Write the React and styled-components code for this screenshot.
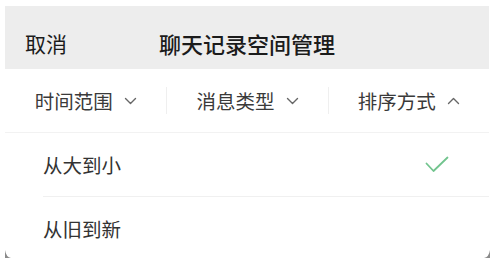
import React from "react";
import styled, { createGlobalStyle } from "styled-components";

const Global = createGlobalStyle`
  html, body { margin: 0; padding: 0; background: #ffffff; }
  body { font-family: "Noto Sans CJK SC", "Noto Sans", sans-serif; }
`;

const Page = styled.div`
  position: relative;
  width: 498px;
  height: 267px;
  padding: 6px 9px 0 5px;
  box-sizing: border-box;
  background: #ffffff;
`;

const Header = styled.div`
  position: relative;
  height: 63px;
  background: #ededed;
  display: flex;
  align-items: center;
  padding: 10px 20px 0 20px;
  box-sizing: border-box;
`;

const Cancel = styled.span`
  font-size: 21px;
  color: #1b1b1b;
`;

const Title = styled.span`
  position: absolute;
  left: 0;
  right: 0;
  top: 10px;
  bottom: 0;
  display: flex;
  align-items: center;
  justify-content: center;
  font-size: 22px;
  font-weight: 500;
  color: #1b1b1b;
  pointer-events: none;
`;

const Tabs = styled.div`
  display: grid;
  grid-template-columns: repeat(3, 1fr);
  height: 63px;
  border-bottom: 1px solid #f2f2f2;
  align-items: center;
`;

const Tab = styled.div`
  display: flex;
  align-items: center;
  justify-content: center;
  gap: 11px;
  height: 27px;
  font-size: 19.5px;
  color: #3a3a3a;
  border-left: ${(p) => (p.$first ? "none" : "1px solid #efefef")};
`;

const Option = styled.div`
  display: flex;
  align-items: center;
  justify-content: space-between;
  height: 63px;
  margin-left: 38px;
  padding-right: 40px;
  font-size: 19.5px;
  color: #333333;
  border-bottom: ${(p) => (p.$last ? "none" : "1px solid #f0f0f0")};
`;

const Corner = styled.svg`
  position: absolute;
  bottom: 9px;
  width: 6px;
  height: 8px;
  ${(p) => (p.$side === "left" ? "left: 5px;" : "right: 8px;")}
`;

const Chevron = ({ up }) => (
  <svg width="13" height="8" viewBox="0 0 13 8" fill="none">
    <path
      d={up ? "M1.5 6.5 L6.5 1.5 L11.5 6.5" : "M1.5 1.5 L6.5 6.5 L11.5 1.5"}
      stroke="#666"
      strokeWidth="1.4"
      strokeLinecap="round"
      strokeLinejoin="round"
    />
  </svg>
);

const Check = () => (
  <svg width="24" height="17" viewBox="0 0 24 17" fill="none">
    <path
      d="M1.5 7.5 L8.5 15 L22.5 1.5"
      stroke="#72c48e"
      strokeWidth="1.8"
      strokeLinecap="round"
      strokeLinejoin="round"
    />
  </svg>
);

export default function App() {
  return (
    <>
      <Global />
      <Page>
        <Header>
          <Cancel>取消</Cancel>
          <Title>聊天记录空间管理</Title>
        </Header>
        <Tabs>
          <Tab $first>
            时间范围 <Chevron />
          </Tab>
          <Tab>
            消息类型 <Chevron />
          </Tab>
          <Tab>
            排序方式 <Chevron up />
          </Tab>
        </Tabs>
        <Option>
          <span>从大到小</span>
          <Check />
        </Option>
        <Option $last>
          <span>从旧到新</span>
        </Option>
        <Corner $side="left" viewBox="0 0 6 8">
          <path d="M0 0 L0 8 L6 8 Q1 7 0 0 Z" fill="#8a8a8a" />
        </Corner>
        <Corner $side="right" viewBox="0 0 6 8">
          <path d="M6 0 L6 8 L0 8 Q5 7 6 0 Z" fill="#8a8a8a" />
        </Corner>
      </Page>
    </>
  );
}
